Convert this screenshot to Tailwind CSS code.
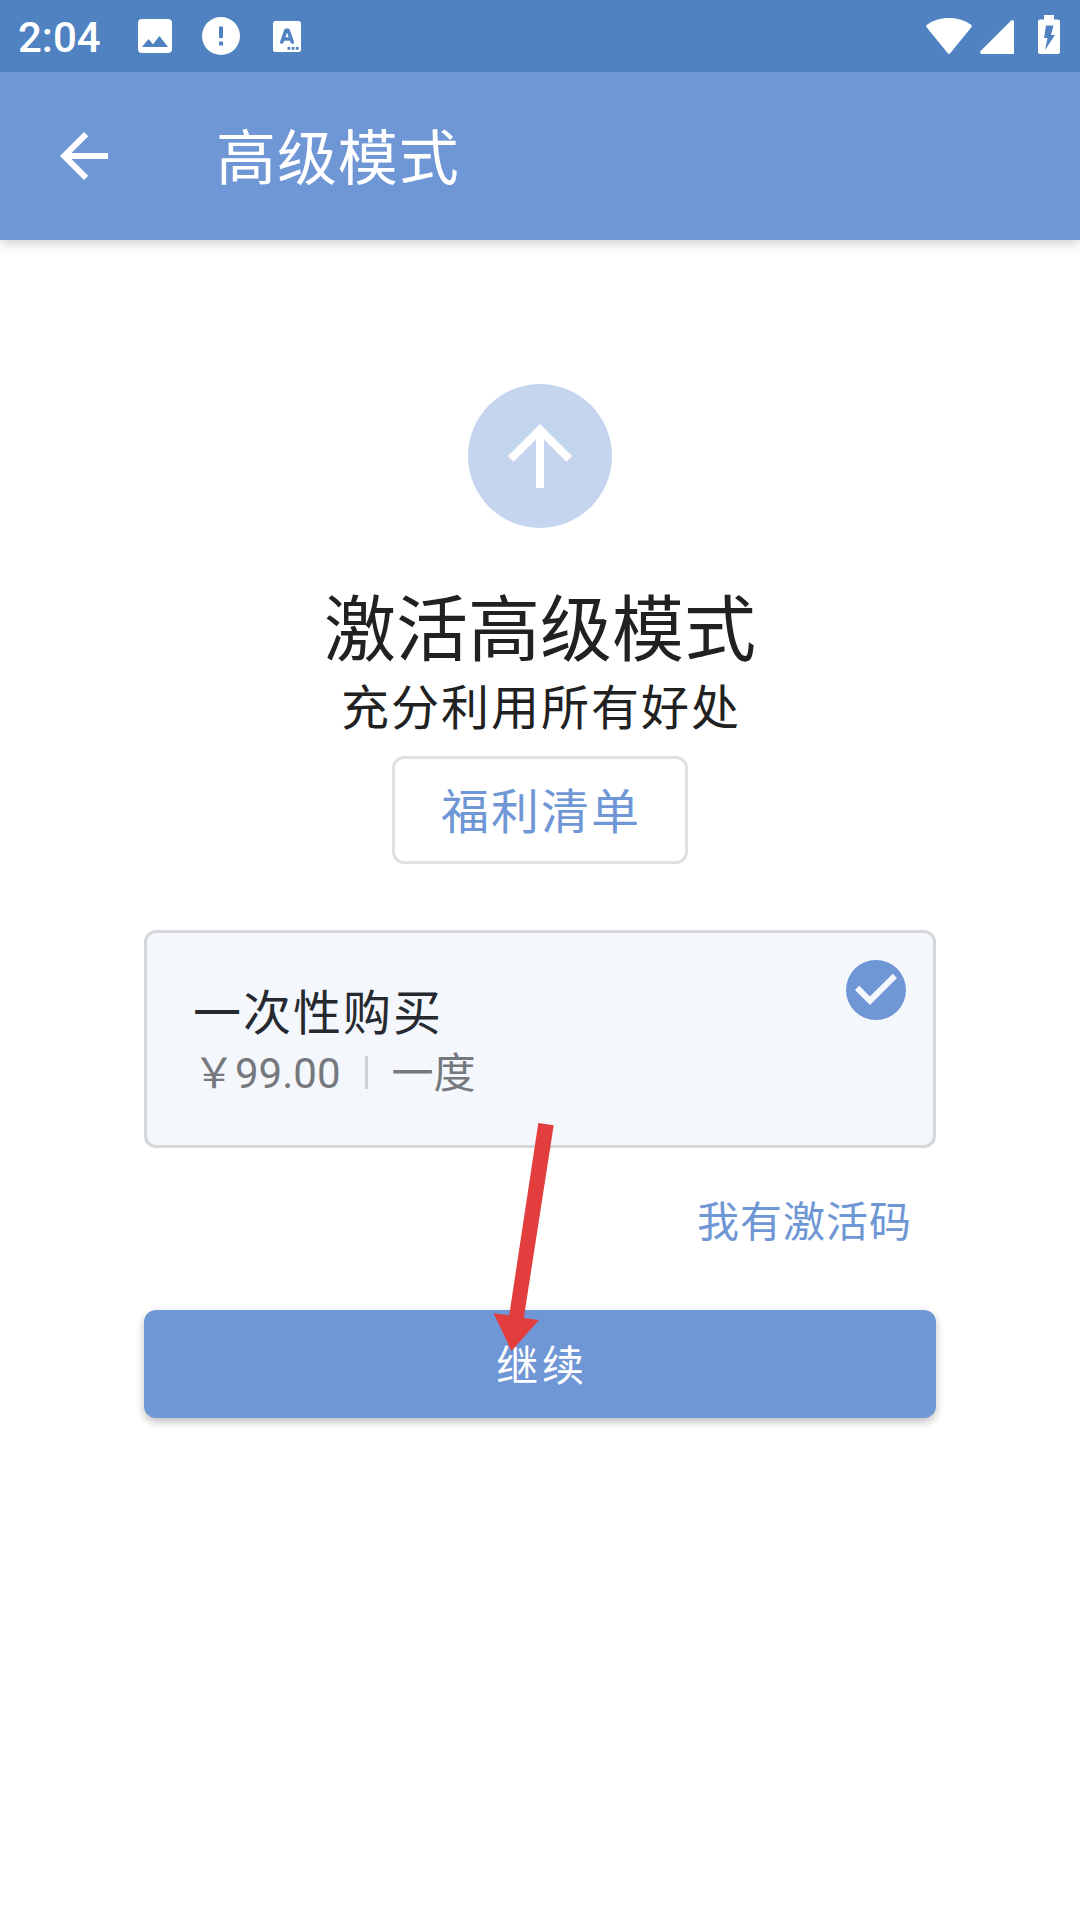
<!DOCTYPE html>
<html lang="zh-CN">
<head>
    <meta charset="UTF-8">
    <meta name="viewport" content="width=device-width, initial-scale=1.0">
    <title>高级模式</title>
    <script src="https://cdn.jsdelivr.net/npm/@tailwindcss/browser@4"></script>
</head>
<body class="relative h-[1920px] w-[1080px] overflow-hidden bg-white font-[Roboto,'Noto_Sans_CJK_SC',sans-serif] text-[#212121]">
    <!-- Status bar -->
    <div class="relative z-10 flex h-18 items-center justify-between bg-[#5082c2] pr-5 pl-[18px] text-white">
        <div class="flex items-center">
            <span class="w-30 pt-[3px] text-[42px] leading-none font-medium">2:04</span>
            <svg class="h-[34px] w-[34px]" viewBox="0 0 34 34" fill="currentColor">
                <path fill-rule="evenodd" d="M4 0h26a4 4 0 0 1 4 4v26a4 4 0 0 1-4 4H4a4 4 0 0 1-4-4V4a4 4 0 0 1 4-4zM4 28h26L21.500 17l-6.500 8.300L10.500 20z"/>
            </svg>
            <svg class="ml-[30px] h-[38px] w-[38px]" viewBox="0 0 38 38" fill="currentColor">
                <path fill-rule="evenodd" d="M19 0a19 19 0 1 1 0 38a19 19 0 1 1 0-38zM17 9.500v11.500h4V9.500zM17 24.500v4h4v-4z"/>
            </svg>
            <svg class="ml-[33px] h-[31px] w-7" viewBox="0 0 28 31">
                <rect width="28" height="31" rx="2.500" fill="currentColor"/>
                <path d="M8.800 21L13 9.200h2L19.300 21M10.500 18h7" fill="none" stroke="#5082c2" stroke-width="3.500" stroke-linecap="round" stroke-linejoin="round"/>
                <path d="M14.500 26h2.800v2.800h-2.800zM18.700 26h2.800v2.800h-2.800zM22.900 26h2.800v2.800h-2.800z" fill="#5082c2"/>
            </svg>
        </div>
        <div class="flex items-center">
            <svg class="h-9 w-[46px]" viewBox="0 0 46 36" fill="currentColor">
                <path d="M.6 9.200Q-.4 7.800 1 6.800C7 2.200 14.500 0 23 0s16 2.200 22 6.800q1.400 1 .4 2.400L24.200 35.200q-1.200 1.400-2.400 0z"/>
            </svg>
            <svg class="mt-px ml-2 h-[34px] w-[34px]" viewBox="0 0 34 34" fill="currentColor">
                <path d="M31 .7q3-1.700 3 1.300v32H1.500Q-.8 34 .6 31z"/>
            </svg>
            <svg class="-mt-[3px] ml-6 h-[39px] w-[22px]" viewBox="0 0 22 39">
                <path d="M6 0h10v4.500h4q2 0 2 2V37q0 2-2 2H2q-2 0-2-2V6.500q0-2 2-2h4z" fill="currentColor"/>
                <path d="M8 10.500h7.500l-2.500 9.500h4L7 35l2.500-12H6z" fill="#5082c2"/>
            </svg>
        </div>
    </div>

    <!-- App bar -->
    <header class="flex h-42 items-center bg-[#6f96d5] pl-12 text-white shadow-[0_3px_12px_rgba(0,0,0,0.2)]">
        <svg class="h-18 w-18" viewBox="0 0 24 24" fill="currentColor">
            <path d="M20 11H7.830l5.590-5.590L12 4l-8 8 8 8 1.410-1.410L7.830 13H20v-2z"/>
        </svg>
        <h1 class="ml-24 pt-[7px] text-[60px] leading-none tracking-[0.9px]">高级模式</h1>
    </header>

    <main class="flex flex-col items-center px-36 pt-36">
        <div class="flex h-36 w-36 items-center justify-center rounded-full bg-[#c5d5ee]">
            <svg class="h-24 w-24 text-white" viewBox="0 0 24 24" fill="currentColor">
                <path d="M4 12l1.410 1.410L11 7.830V20h2V7.830l5.580 5.590L20 12l-8-8-8 8z"/>
            </svg>
        </div>
        <h2 class="mt-[51px] text-[72px] leading-[104px]">激活高级模式</h2>
        <p class="-mt-[2px] pl-[2px] text-5xl leading-14 tracking-[2px]">充分利用所有好处</p>
        <button class="mt-[19px] h-27 w-[296px] rounded-xl border-3 border-[#e0e0e0] pt-[5px] pl-[2px] text-5xl tracking-[2px] text-[#6f96d5]">福利清单</button>

        <!-- Purchase option -->
        <section class="mt-[66px] flex h-[218px] w-full justify-between rounded-xl border-3 border-[#d5d7d9] bg-[#f4f7fc] pl-[46px]">
            <div class="pt-[50px]">
                <h3 class="text-5xl leading-[62px] tracking-[2px] text-[#262a30]">一次性购买</h3>
                <div class="-mt-px flex items-center text-[42px] leading-[60px] text-[#75787c]">
                    <span>&#65509;99.00</span>
                    <i class="mr-6 mb-[3px] ml-6 h-[33px] w-[3px] bg-[#cfd2d6]"></i>
                    <span>一度</span>
                </div>
            </div>
            <svg class="mt-[21px] mr-[21px] h-18 w-18 text-[#6f96d5]" viewBox="0 0 24 24" fill="currentColor">
                <path fill-rule="evenodd" d="M12 2a10 10 0 1 0 0 20a10 10 0 1 0 0-20zM10 17l-5-5 1.410-1.410L10 14.170l7.590-7.590L19 8l-9 9z"/>
            </svg>
        </section>

        <a class="mt-[45px] mr-6 self-end text-[42px] leading-[60px] tracking-[1px] text-[#6f96d5]">我有激活码</a>
        <button class="mt-[57px] h-27 w-full rounded-xl bg-[#6f96d5] pt-1 pl-1 text-[42px] tracking-[3.750px] text-white shadow-[0_4px_8px_rgba(0,0,0,0.25)]">继续</button>
    </main>

    <!-- Pointer arrow over the page -->
    <svg class="absolute top-0 left-0 h-[1920px] w-[1080px]" viewBox="0 0 1080 1920">
        <path d="M538.300 1123L553.700 1125.200L523.800 1318L539 1320L511.500 1351L493.500 1313.300L509.200 1315.300z" fill="#e33e3e"/>
    </svg>
</body>
</html>
